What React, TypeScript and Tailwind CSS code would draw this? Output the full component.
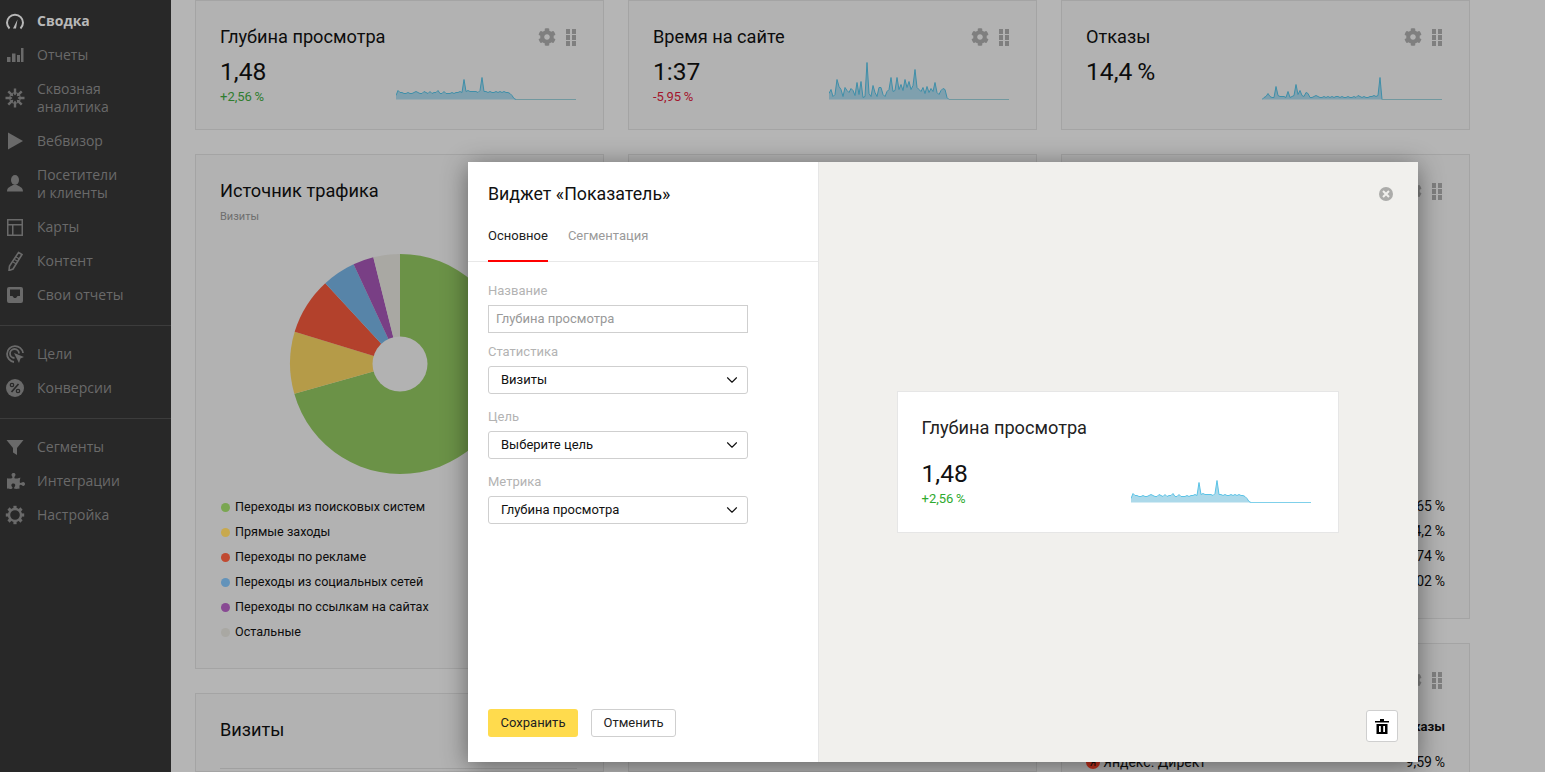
import type { ReactNode } from "react";
import { FaCog, FaPuzzlePiece } from "react-icons/fa";
import { ChevronDown } from "lucide-react";

const depth = [4,9,7,7,6,6,7,6,6,7,8,7,6,6,8,7,6,8,6,7,7,9,6,6,8,6,6,6,7,6,7,7,8,7,20,8,9,8,8,8,8,7,9,22,8,8,7,8,7,7,8,7,8,7,8,7,7,6,4,1];
const time = [6,10,3,5,20,13,10,3,12,9,7,11,9,4,17,5,18,2,3,37,6,3,14,7,3,12,12,5,3,8,10,22,8,9,22,10,15,9,20,12,18,10,14,30,12,10,8,12,6,13,7,11,8,17,7,5,9,11,10,2];
const bounce = [0,2,3,6,3,2,2,13,4,3,3,3,2,8,2,3,4,15,5,9,4,3,7,6,2,2,3,4,3,2,2,3,2,3,2,3,2,3,3,2,3,2,2,3,2,2,3,2,4,3,2,3,2,2,3,3,4,3,4,22];

function Spark({ data, stroke, fill, tail }: { data: number[]; stroke: string; fill: string; tail: string }) {
  const base = 39.5;
  const end = data.length * 2;
  const line = data.map((h, i) => `L${i * 2},${base - h}`).join(" ");
  return (
    <svg width="180" height="40" className="block shrink-0">
      <path d={`M0,${base} ${line} L${end},${base} Z`} fill={fill} />
      <path d={`M0,${base - data[0]} ${line} L${end},${base}`} fill="none" stroke={stroke} strokeWidth="1" />
      <path d={`M${end},${base} L180,${base}`} fill="none" stroke={tail} strokeWidth="1" />
    </svg>
  );
}

function Grip() {
  return (
    <svg width="10" height="17" fill="#7f7f7f" className="block">
      <rect x="0" y="0" width="4" height="5" /><rect x="6" y="0" width="4" height="5" />
      <rect x="0" y="6" width="4" height="5" /><rect x="6" y="6" width="4" height="5" />
      <rect x="0" y="12" width="4" height="5" /><rect x="6" y="12" width="4" height="5" />
    </svg>
  );
}

function Tools() {
  return (
    <div className="flex items-center gap-[10px]">
      <FaCog className="text-[18px] text-[#7f7f7f]" />
      <Grip />
    </div>
  );
}

function StatCard({ title, value, delta, deltaColor, data }: { title: string; value: string; delta?: string; deltaColor?: string; data: number[] }) {
  return (
    <div className="h-[130px] shrink-0 border border-[#a4a4a4] bg-[#b2b2b2] pl-[24px] pr-[27px] pt-[25px]">
      <div className="flex h-[22px] items-start justify-between">
        <span className="text-[18.2px] leading-[22px] text-[#0c0c0c]">{title}</span>
        <div className="mt-[2px]"><Tools /></div>
      </div>
      <div className="flex items-end justify-between">
        <div className="h-[44px] pt-[10px]">
          <div className="text-[24.6px] leading-[28px] text-[#0c0c0c]">{value}</div>
          {delta && <div className={`mt-[4px] text-[13px] leading-[14px] ${deltaColor}`}>{delta}</div>}
        </div>
        <div className="-mb-[8px]">
          <Spark data={data} stroke="#3f8fa9" fill="#7fa0ae" tail="#72989f" />
        </div>
      </div>
    </div>
  );
}

function PieChart() {
  return (
    <svg width="222" height="222" viewBox="289 253 222 222" className="block">
      <path d="M400,364 L400,254 A110,110 0 1 1 294.3,393.7 Z" fill="#6b9247" />
      <path d="M400,364 L294.3,393.7 A110,110 0 0 1 294.7,331.7 Z" fill="#b59b48" />
      <path d="M400,364 L294.7,331.7 A110,110 0 0 1 325.3,283.3 Z" fill="#b3412c" />
      <path d="M400,364 L325.3,283.3 A110,110 0 0 1 353.6,264.3 Z" fill="#5784a8" />
      <path d="M400,364 L353.6,264.3 A110,110 0 0 1 373.3,257.3 Z" fill="#793f85" />
      <path d="M400,364 L373.3,257.3 A110,110 0 0 1 400,254 Z" fill="#a9a8a3" />
      <circle cx="400" cy="364" r="27.5" fill="#b2b2b2" />
    </svg>
  );
}

const legend = [
  ["Переходы из поисковых систем", "bg-[#7aa651]"],
  ["Прямые заходы", "bg-[#c8a94e]"],
  ["Переходы по рекламе", "bg-[#c04a31]"],
  ["Переходы из социальных сетей", "bg-[#6393ba]"],
  ["Переходы по ссылкам на сайтах", "bg-[#884a93]"],
  ["Остальные", "bg-[#a9a8a3]"],
];

function Icon({ children }: { children: ReactNode }) {
  return (
    <svg width="20" height="20" viewBox="0 0 20 20" fill="currentColor" className="block shrink-0">
      {children}
    </svg>
  );
}

const icons: Record<string, ReactNode> = {
  gauge: (
    <Icon>
      <path d="M4.5 17.5 A8 8 0 1 1 15.5 17.5" fill="none" stroke="currentColor" strokeWidth="2" />
      <path d="M8 17.5 L12.5 8.5 L11 17.5 Z" />
    </Icon>
  ),
  bars: (
    <Icon>
      <rect x="2" y="12" width="3.5" height="5" /><rect x="7" y="8.5" width="3.5" height="8.5" />
      <rect x="12" y="10" width="3" height="7" /><rect x="16" y="3" width="2.5" height="14" />
    </Icon>
  ),
  burst: (
    <Icon>
      {[0, 45, 90, 135, 180, 225, 270, 315].map((a) => (
        <path key={a} d="M8.8 0.5 L11.2 0.5 L11.2 4.5 L12.4 4.5 L10 7.5 L7.6 4.5 L8.8 4.5 Z" transform={`rotate(${a} 10 10)`} />
      ))}
    </Icon>
  ),
  play: <Icon><path d="M3 1.5 L18 10 L3 18.5 Z" /></Icon>,
  user: (
    <Icon>
      <ellipse cx="10" cy="6" rx="4" ry="5" />
      <path d="M2 17.5 C2 13 6 12.5 8 11 L12 11 C14 12.5 18 13 18 17.5 Z" />
    </Icon>
  ),
  map: (
    <Icon>
      <path fillRule="evenodd" d="M2 2 H18 V19 H2 Z M3.5 3.5 V7 H16.5 V3.5 Z M3.5 8.5 V17.5 H7 V8.5 Z M8.5 8.5 V17.5 H16.5 V8.5 Z" />
    </Icon>
  ),
  pencil: (
    <Icon>
      <path d="M13.5 1.5 L17 3.5 L8 18 L4 19.5 L4.5 15 Z" fill="none" stroke="currentColor" strokeWidth="1.6" />
      <path d="M11 6 L14.5 8 M9.5 8.5 L13 10.5 M8 11 L11.5 13" stroke="currentColor" strokeWidth="1.2" />
    </Icon>
  ),
  inbox: (
    <Icon>
      <path fillRule="evenodd" d="M4 2 H16 Q18 2 18 4 V16 Q18 18 16 18 H4 Q2 18 2 16 V4 Q2 2 4 2 Z M5 4.5 V11 H7.5 L9 13 H11 L12.5 11 H15 V4.5 Z" />
    </Icon>
  ),
  goal: (
    <Icon>
      <path d="M9 18 A8 8 0 1 1 18 9" fill="none" stroke="currentColor" strokeWidth="1.8" />
      <path d="M9.5 14 A4.5 4.5 0 1 1 14 9.5" fill="none" stroke="currentColor" strokeWidth="1.8" />
      <path d="M9 9 L19 13 L15.5 14.5 L14 19 Z" />
    </Icon>
  ),
  percent: (
    <Icon>
      <circle cx="10" cy="10" r="9" />
      <path d="M13.5 6 L6.5 14" stroke="#282828" strokeWidth="1.6" />
      <circle cx="7" cy="7" r="1.7" fill="none" stroke="#282828" strokeWidth="1.3" />
      <circle cx="13" cy="13" r="1.7" fill="none" stroke="#282828" strokeWidth="1.3" />
    </Icon>
  ),
  funnel: <Icon><path d="M1.5 3 H18.5 L12 11 V18 L8 15.5 V11 Z" /></Icon>,
  puzzle: <FaPuzzlePiece className="ml-[2px] block shrink-0 text-[18px]" />,
  settings: (
    <Icon>
      <circle cx="10" cy="10" r="6" fill="none" stroke="currentColor" strokeWidth="2.4" />
      {[0, 45, 90, 135, 180, 225, 270, 315].map((a) => (
        <rect key={a} x="8.4" y="0.8" width="3.2" height="3.6" transform={`rotate(${a} 10 10)`} />
      ))}
    </Icon>
  ),
};

function NavItem({ icon, active, children }: { icon: string; active?: boolean; children: ReactNode }) {
  return (
    <div className={`flex items-center gap-[12px] py-[8px] pl-[5px] text-[14px] leading-[18px] ${active ? "font-bold text-[#b8b8b8]" : "text-[#6a6a6a]"}`}>
      <span className="flex h-[18px] w-[20px] shrink-0 items-center">{icons[icon]}</span>
      <span>{children}</span>
    </div>
  );
}

function Sidebar() {
  return (
    <aside className="h-full w-[171px] shrink-0 bg-[#282828] pt-[4px] font-['Open_Sans',sans-serif]">
      <NavItem icon="gauge" active>Сводка</NavItem>
      <NavItem icon="bars">Отчеты</NavItem>
      <NavItem icon="burst">Сквозная<br />аналитика</NavItem>
      <NavItem icon="play">Вебвизор</NavItem>
      <NavItem icon="user">Посетители<br />и клиенты</NavItem>
      <NavItem icon="map">Карты</NavItem>
      <NavItem icon="pencil">Контент</NavItem>
      <NavItem icon="inbox">Свои отчеты</NavItem>
      <div className="mb-[11px] mt-[13px] h-px bg-[#3c3c3c]" />
      <NavItem icon="goal">Цели</NavItem>
      <NavItem icon="percent">Конверсии</NavItem>
      <div className="mb-[11px] mt-[13px] h-px bg-[#3c3c3c]" />
      <NavItem icon="funnel">Сегменты</NavItem>
      <NavItem icon="puzzle">Интеграции</NavItem>
      <NavItem icon="settings">Настройка</NavItem>
    </aside>
  );
}

function Dashboard() {
  return (
    <main className="flex h-full flex-1 gap-[24px] overflow-hidden pl-[24px] text-[#0c0c0c]">
      <div className="flex w-[409px] shrink-0 flex-col gap-[24px]">
        <StatCard title="Глубина просмотра" value="1,48" delta={"+2,56\u2009%"} deltaColor="text-[#2f7d2f]" data={depth} />
        <div className="h-[515px] shrink-0 border border-[#a4a4a4] bg-[#b2b2b2] px-[24px] pt-[25px]">
          <div className="text-[18.2px] leading-[22px]">Источник трафика</div>
          <div className="mt-[8px] text-[11px] leading-[14px] text-[#6e6e6e]">Визиты</div>
          <div className="ml-[69px] mt-[29px]"><PieChart /></div>
          <div className="mt-[20px]">
            {legend.map(([name, dot]) => (
              <div key={name} className="flex h-[25px] items-center gap-[5px] pl-px text-[12.6px]">
                <span className={`h-[9px] w-[9px] rounded-full ${dot}`} />
                <span>{name}</span>
              </div>
            ))}
          </div>
        </div>
        <div className="flex-1 border border-[#a4a4a4] bg-[#b2b2b2] px-[24px] pt-[25px]">
          <div className="text-[18.2px] leading-[22px]">Визиты</div>
          <div className="mr-[2px] mt-[27px] h-px bg-[#a0a0a0]" />
        </div>
      </div>

      <div className="flex w-[409px] shrink-0 flex-col gap-[24px]">
        <StatCard title="Время на сайте" value="1:37" delta={"-5,95\u2009%"} deltaColor="text-[#a3142c]" data={time} />
        <div className="flex-1 border border-[#a4a4a4] bg-[#b2b2b2]" />
      </div>

      <div className="flex w-[409px] shrink-0 flex-col gap-[24px]">
        <StatCard title="Отказы" value={"14,4\u2009%"} data={bounce} />
        <div className="h-[465px] shrink-0 border border-[#a4a4a4] bg-[#b2b2b2] pl-[24px] pr-[24px] pt-[27px]">
          <div className="flex h-[18px] justify-end pr-[3px]"><Tools /></div>
          <div className="mt-[294px] text-right text-[14px]">
            <div className="h-[25px] leading-[25px]">{"65,65\u2009%"}</div>
            <div className="h-[25px] leading-[25px]">{"14,2\u2009%"}</div>
            <div className="h-[25px] leading-[25px]">{"8,74\u2009%"}</div>
            <div className="h-[25px] leading-[25px]">{"5,02\u2009%"}</div>
          </div>
        </div>
        <div className="flex-1 border border-[#a4a4a4] bg-[#b2b2b2] pl-[24px] pr-[24px] pt-[27px]">
          <div className="flex h-[18px] justify-end pr-[3px]"><Tools /></div>
          <div className="mt-[28px] text-right text-[13px] font-bold">Отказы</div>
          <div className="mt-[15px] flex items-center justify-between text-[14px]">
            <span className="flex items-center gap-[3px]">
              <span className="flex h-[14px] w-[14px] items-center justify-center rounded-full bg-[#c1301c] text-[10px] text-[#0c0c0c]">Я</span>
              Яндекс. Директ
            </span>
            <span>{"9,59\u2009%"}</span>
          </div>
        </div>
      </div>
    </main>
  );
}

function Label({ children, top }: { children: ReactNode; top: string }) {
  return <div className={`${top} text-[13px] leading-[16px] text-[#b3b3b3]`}>{children}</div>;
}

function Select({ children }: { children: ReactNode }) {
  return (
    <div className="mt-[6px] flex h-[28px] w-[260px] items-center justify-between rounded-[3px] border border-[#cfcfcf] pl-[12px] pr-[6px] text-[13px] text-[#111]">
      <span>{children}</span>
      <ChevronDown size={18} strokeWidth={1.5} />
    </div>
  );
}

function Modal() {
  return (
    <div className="absolute left-[468px] top-[162px] flex h-[600px] w-[950px] bg-white shadow-[0_4px_24px_rgba(0,0,0,0.45)]">
      <div className="flex w-[351px] shrink-0 flex-col border-r border-[#e6e6e6]">
        <div className="px-[20px] pt-[21px] text-[17.8px] leading-[22px] text-[#111]">Виджет «Показатель»</div>
        <div className="mt-[19px] flex h-[38px] gap-[20px] border-b border-[#e8e8e8] px-[20px] text-[13px]">
          <div className="h-[38px] border-b-2 border-[#f00] pt-[3px] leading-[18px] text-[#222]">Основное</div>
          <div className="pt-[3px] leading-[18px] text-[#9a9a9a]">Сегментация</div>
        </div>
        <div className="flex-1 px-[20px]">
          <Label top="mt-[21px]">Название</Label>
          <div className="mt-[6px] flex h-[28px] w-[260px] items-center border border-[#cfcfcf] pl-[7px] text-[13px] text-[#999]">Глубина просмотра</div>
          <Label top="mt-[11px]">Статистика</Label>
          <Select>Визиты</Select>
          <Label top="mt-[15px]">Цель</Label>
          <Select>Выберите цель</Select>
          <Label top="mt-[15px]">Метрика</Label>
          <Select>Глубина просмотра</Select>
        </div>
        <div className="flex gap-[13px] px-[20px] pb-[25px] text-[13px] text-[#222]">
          <button className="h-[28px] w-[90px] rounded-[3px] bg-[#ffdb4d]">Сохранить</button>
          <button className="h-[28px] w-[85px] rounded-[3px] border border-[#cfcfcf] bg-white">Отменить</button>
        </div>
      </div>
      <div className="relative flex flex-1 items-center justify-center bg-[#f1f0ed]">
        <div className="absolute right-[25px] top-[25px] flex h-[14px] w-[14px] items-center justify-center rounded-full bg-[#acacaa]">
          <svg width="8" height="8" viewBox="0 0 8 8" stroke="#f1f0ed" strokeWidth="2"><path d="M1 1 L7 7 M7 1 L1 7" /></svg>
        </div>
        <div className="ml-[-2px] h-[142px] w-[442px] border border-[#e6e6e6] bg-white pl-[24px] pr-[27px] pt-[26px]">
          <div className="text-[18.2px] leading-[20px] text-[#222]">Глубина просмотра</div>
          <div className="flex items-end justify-between">
            <div className="pt-[22px]">
              <div className="text-[24.6px] leading-[28px] text-[#111]">1,48</div>
              <div className="mt-[4px] text-[13px] leading-[14px] text-[#2eaa2e]">{"+2,56\u2009%"}</div>
            </div>
            <div className="mb-[3px]">
              <Spark data={depth} stroke="#5ac3e6" fill="#acd9ea" tail="#7fd0ea" />
            </div>
          </div>
        </div>
        <button className="absolute bottom-[20px] right-[20px] flex h-[32px] w-[32px] items-center justify-center rounded-[3px] border border-[#cfcfcf] bg-white">
          <svg width="14" height="15" viewBox="0 0 14 15" fill="#000">
            <path d="M5 0 H9 V2 H14 V3.5 H0 V2 H5 Z" />
            <path fillRule="evenodd" d="M1.5 5 H12.5 V15 H1.5 Z M4 7 V13 H5.8 V7 Z M8.2 7 V13 H10 V7 Z" />
          </svg>
        </button>
      </div>
    </div>
  );
}

export default function App() {
  return (
    <div className="relative flex h-[772px] w-[1545px] overflow-hidden bg-[#b5b5b5] font-['Roboto',sans-serif]">
      <Sidebar />
      <Dashboard />
      <Modal />
    </div>
  );
}
